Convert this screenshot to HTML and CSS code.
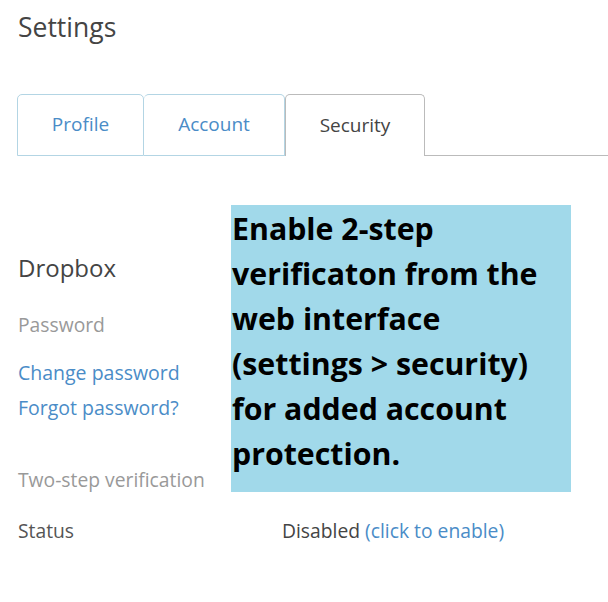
FILE: index.html
```html
<!DOCTYPE html>
<html>
<head>
<meta charset="utf-8">
<link rel="stylesheet" href="styles.css">
</head>
<body>
<div class="page">
  <h1 class="title">Settings</h1>
  <div class="tabs">
    <div class="tab tab-link">Profile</div>
    <div class="tab tab-link tab-account">Account</div>
    <div class="tab tab-active">Security</div>
    <div class="tab-rest"></div>
  </div>
  <div class="content">
    <div class="section-title">Dropbox</div>
    <div class="label label-password">Password</div>
    <div class="links">
      <a class="link">Change password</a>
      <a class="link">Forgot password?</a>
    </div>
    <div class="label label-twostep">Two-step verification</div>
    <div class="row">
      <div class="row-label">Status</div>
      <div class="row-value">Disabled <a class="link-inline">(click to enable)</a></div>
    </div>
  </div>
  <div class="callout">Enable 2-step<br>verificaton from the<br>web interface<br>(settings &gt; security)<br>for added account<br>protection.</div>
</div>
</body>
</html>
```
FILE: styles.css
```css
* { box-sizing: border-box; }
body {
  margin: 0;
  background: #fff;
  font-family: "Open Sans", "Noto Sans", sans-serif;
}
.page {
  position: relative;
  width: 608px;
  height: 602px;
  overflow: hidden;
}
.title {
  margin: 0;
  padding: 9px 0 0 18px;
  font-size: 26.5px;
  line-height: 36px;
  font-weight: 400;
  color: #444;
}
.tabs {
  display: flex;
  margin-top: 49px;
  padding-left: 17px;
  height: 62px;
}
.tab {
  display: flex;
  align-items: center;
  justify-content: center;
  font-size: 19px;
  height: 62px;
  padding-bottom: 2px;
}
.tab-link {
  width: 127px;
  color: #4a8cc7;
  border: 1px solid #b3d5e4;
  border-radius: 5px 5px 0 0;
}
.tab-account {
  width: 141px;
  border-left: none;
}
.tab-active {
  width: 140px;
  color: #444;
  border: 1px solid #bbb;
  border-bottom: none;
  border-radius: 5px 5px 0 0;
  background: #fff;
}
.tab-rest {
  flex: 1;
  border-bottom: 1px solid #bbb;
}
.content {
  padding-left: 18px;
}
.section-title {
  margin-top: 96px;
  font-size: 24px;
  line-height: 32px;
  color: #444;
}
.label {
  font-size: 19.3px;
  line-height: 26px;
  color: #999;
}
.label-password { margin-top: 28px; }
.links {
  display: flex;
  flex-direction: column;
  margin-top: 17px;
}
.link {
  font-size: 19.5px;
  line-height: 35px;
  color: #4a8cc7;
}
.label-twostep { margin-top: 42px; }
.row {
  display: flex;
  margin-top: 25px;
  font-size: 19.3px;
  line-height: 26px;
}
.row-label {
  width: 264px;
  color: #555;
}
.row-value {
  color: #444;
}
.link-inline { color: #4a8cc7; }
.callout {
  position: absolute;
  left: 231px;
  top: 205px;
  width: 340px;
  height: 287px;
  background: #a1d9ea;
  padding: 1px 4px 0 1px;
  font-family: "Open Sans", sans-serif;
  font-weight: 700;
  font-size: 30.3px;
  line-height: 45px;
  white-space: nowrap;
  color: #000;
}
```
